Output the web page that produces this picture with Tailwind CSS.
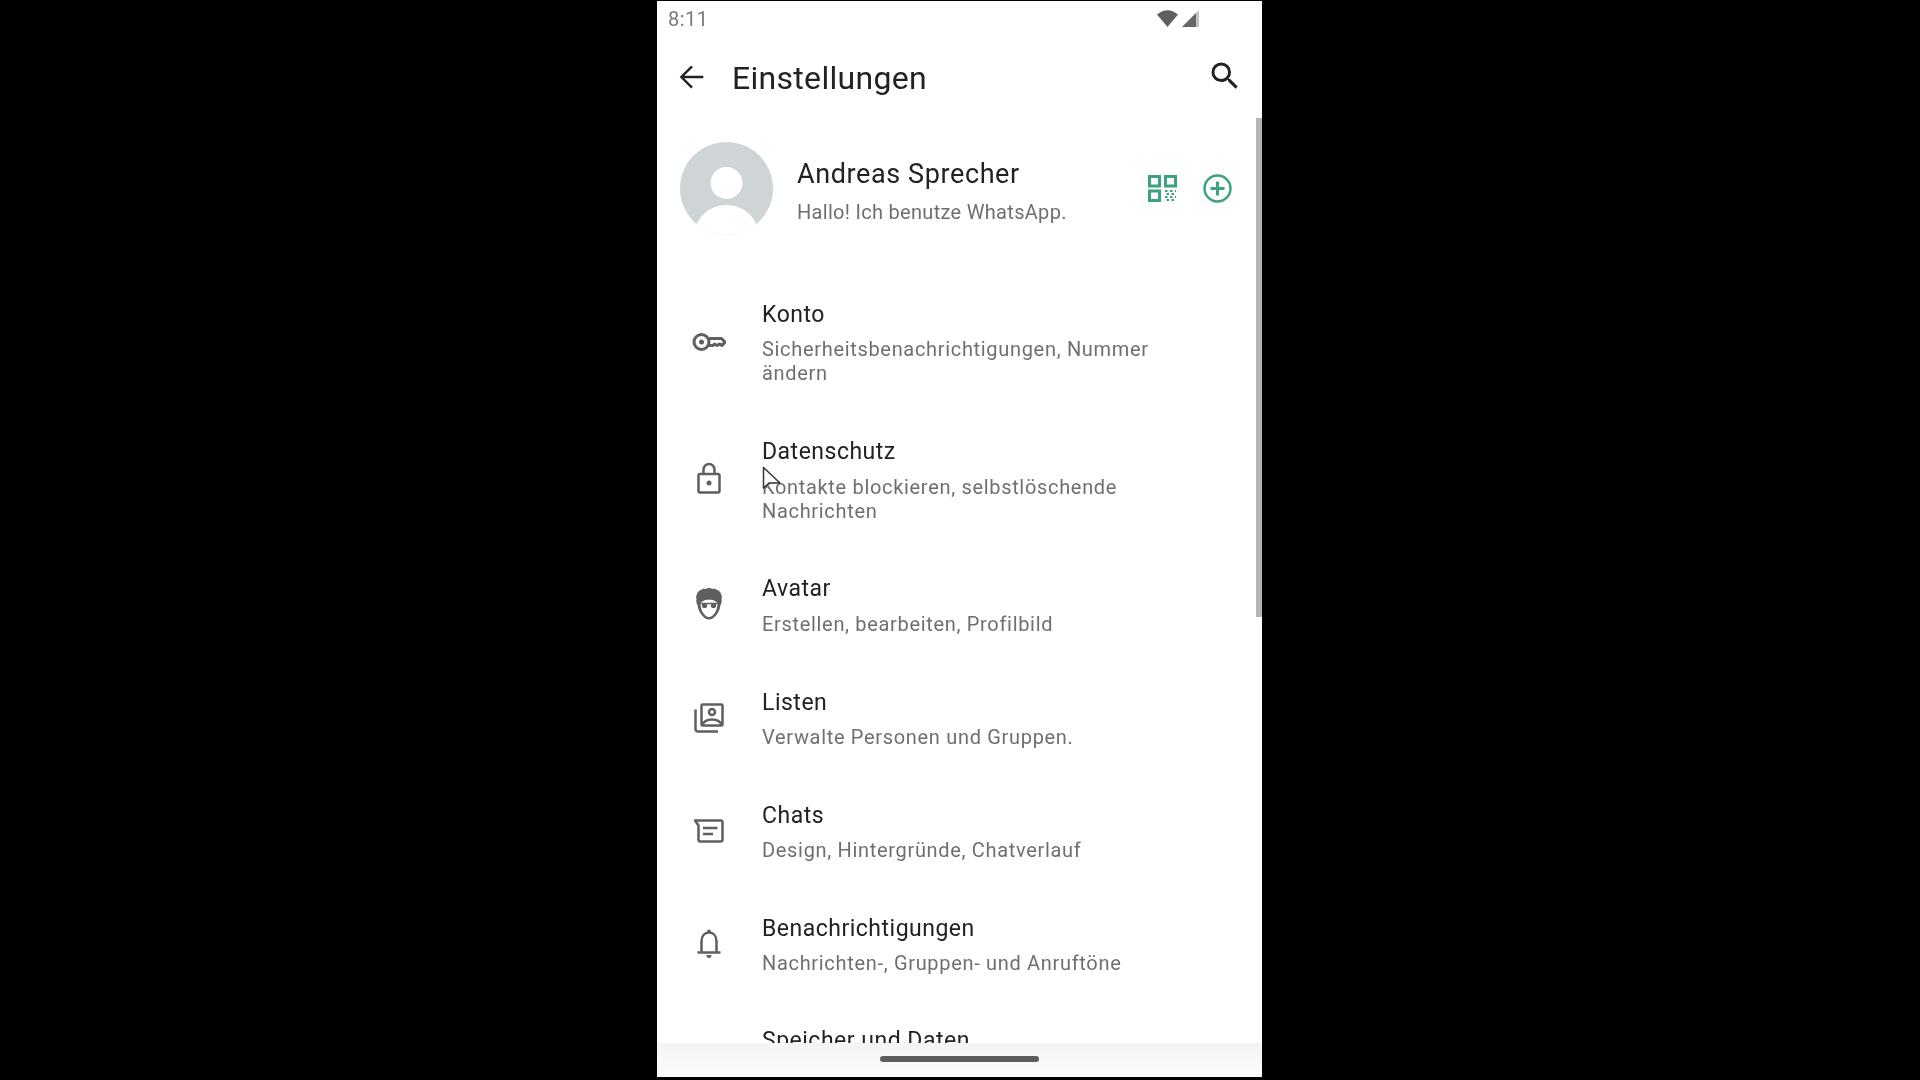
<!doctype html>
<html lang="de">
<head>
<meta charset="utf-8">
<title>Einstellungen</title>
<script src="https://cdn.jsdelivr.net/npm/@tailwindcss/browser@4"></script>
</head>
<body class="bg-black [font-family:Roboto,sans-serif]">
<div class="flex h-[1080px] w-[1920px] overflow-hidden bg-black pt-px pl-[657px]">
  <div class="relative flex flex-col w-[605px] h-[1076px] bg-white overflow-hidden blur-[0.5px]">
    <!-- status -->
    <div class="flex items-start h-[36px] shrink-0 pl-[11px] pr-[63px] text-[20px] text-[#7a7a7a] tracking-[0.5px]">
      <span class="mt-[3px]">8:11</span>
      <div class="ml-auto flex items-center gap-[4px] mt-[8px]">
        <svg class="w-[21px] h-[18px] text-[#5f5f5f]" viewBox="0 0 21 18"><path fill="currentColor" d="M0 5.500Q10.500-3 21 5.500L10.500 18Z"/></svg>
        <svg class="w-[17px] h-[17px]" viewBox="0 0 17 17"><path fill="#c4c4c4" d="M17 0V17H0Z"/><path fill="#666" d="M14 3V17H0Z"/></svg>
      </div>
    </div>
    <!-- toolbar -->
    <div class="flex items-center h-[80px] shrink-0 pl-[18px] pr-[19px] text-[#222]">
      <svg class="w-[34px] h-[34px]" viewBox="0 0 24 24" fill="none" stroke="currentColor" stroke-width="1.700"><path d="M20 12H4.500M12 4.500 4.500 12l7.500 7.500"/></svg>
      <h1 class="ml-[23px] mt-[2px] text-[32px] leading-[40px] font-normal tracking-[0.3px]">Einstellungen</h1>
      <svg class="ml-auto w-[36px] h-[36px] -mt-[3px]" viewBox="0 0 24 24" fill="currentColor"><path d="M15.500 14h-.79l-.28-.27A6.470 6.470 0 0 0 16 9.500 6.500 6.500 0 1 0 9.500 16c1.610 0 3.090-.59 4.230-1.570l.27.28v.79l5 4.990L20.490 19l-4.990-5zm-6 0C7.010 14 5 11.990 5 9.500S7.010 5 9.500 5 14 7.010 14 9.500 11.990 14 9.500 14z"/></svg>
    </div>
    <!-- profile -->
    <div class="flex items-center h-[142px] shrink-0 pl-[23px] pr-[30px]">
      <svg class="w-[93px] h-[93px] shrink-0" viewBox="0 0 93 93">
        <defs><clipPath id="av"><circle cx="46.500" cy="46.500" r="46.500"/></clipPath></defs>
        <circle cx="46.500" cy="46.500" r="46.500" fill="#cfd4d7"/>
        <g clip-path="url(#av)" fill="#fff"><circle cx="46.500" cy="41" r="16"/><ellipse cx="46.500" cy="93" rx="32" ry="30"/></g>
      </svg>
      <div class="ml-[24px] pt-[5px]">
        <div class="text-[27px] leading-[34px] text-[#222] tracking-[0.6px]">Andreas Sprecher</div>
        <div class="mt-[8px] text-[20px] leading-[26px] text-[#6f6f6f] tracking-[0.3px]">Hallo! Ich benutze WhatsApp.</div>
      </div>
      <div class="ml-auto flex items-center gap-[26px] text-[#3da27f]">
        <svg class="w-[29px] h-[27px]" viewBox="0 0 29 27" fill="none" stroke="currentColor" stroke-width="3">
          <rect x="1.500" y="1.500" width="10" height="9.500"/><rect x="17.500" y="1.500" width="10" height="9.500"/><rect x="1.500" y="16" width="10" height="9.500"/>
          <path stroke-width="2" stroke-dasharray="2.500 2.500" d="M17 16h11M18.500 19h10M17 22h11M18.500 25h10"/>
        </svg>
        <svg class="w-[29px] h-[29px]" viewBox="0 0 29 29" fill="none" stroke="currentColor"><circle cx="14.500" cy="14.500" r="13" stroke-width="2.500"/><path stroke-width="3" d="M14.500 7.500v14M7.500 14.500h14"/></svg>
      </div>
    </div>
    <div class="h-[15px] shrink-0"></div>
    <!-- list -->
    <div class="flex-1 min-h-0 overflow-hidden">
      <div class="flex h-[137px] pt-[26px]">
        <div class="w-[105px] shrink-0 flex justify-center pr-[2px] pt-[33px] text-[#5f5f5f]">
          <svg class="w-[34px] h-[18px]" viewBox="0 0 34 18" fill="none" stroke="currentColor" stroke-width="3"><circle cx="9.500" cy="9" r="7.500"/><circle cx="9.500" cy="9" r="2.500" fill="currentColor" stroke="none"/><path stroke-linejoin="round" d="M17 5.500h12.500L33 9l-3 3.500-2.500-1.500-2.500 1.500-2.500-1.500-1.500 1.500H17"/></svg>
        </div>
        <div class="pr-[30px]">
          <div class="text-[23px] leading-[30px] text-[#222] tracking-[0.5px]">Konto</div>
          <div class="mt-[7px] text-[20px] leading-[24px] text-[#6f6f6f] tracking-[0.68px]">Sicherheitsbenachrichtigungen, Nummer<br>ändern</div>
        </div>
      </div>
      <div class="flex h-[137px] pt-[26px]">
        <div class="w-[105px] shrink-0 flex justify-center pr-[2px] pt-[25px] text-[#5f5f5f]">
          <svg class="w-[24px] h-[32px]" viewBox="0 0 24 32" fill="none" stroke="currentColor" stroke-width="2.500"><rect x="1.500" y="12" width="21" height="18.500" rx="1.500"/><path d="M6.500 12V7.500a5.500 5.500 0 0 1 11 0V12"/><circle cx="12" cy="21" r="2.500" fill="currentColor" stroke="none"/></svg>
        </div>
        <div class="pr-[30px]">
          <div class="text-[23px] leading-[30px] text-[#222] tracking-[0.5px]">Datenschutz</div>
          <div class="mt-[8px] text-[20px] leading-[24px] text-[#6f6f6f] tracking-[0.68px]">Kontakte blockieren, selbstlöschende<br>Nachrichten</div>
        </div>
      </div>
      <div class="flex h-[113px] pt-[26px]">
        <div class="w-[105px] shrink-0 flex justify-center pr-[2px] pt-[14px] text-[#5f5f5f]">
          <svg class="w-[26px] h-[32px]" viewBox="0 0 26 32"><path fill="currentColor" d="M13 0c1.500 0 2.500.5 3.500 1 1.500-.5 3.500 0 4.500 1 2 .5 3.500 2 4 4 1 1.500 1 3.500 .5 5.500.5 2 0 4-1 5.500-.5 4.500-2.500 8.500-5 11-2 2.500-4 3.500-6.500 3.500s-4.500-1-6.500-3.500c-2.500-2.500-4.500-6.500-5-11-1-1.500-1.500-3.500-1-5.500-.5-2-.5-4 .5-5.500.5-2 2-3.500 4-4 1-1 3-1.500 4.500-1 1-.5 2-1 3.500-1Z"/><path fill="#fff" d="M4.500 15c1.500-1.500 3-2.500 5-3 2.500-.5 4.500-.5 7 0 2 .5 3.500 1.500 5 3 0 5-1.500 8.500-3.500 11-1.500 2-3 3-5 3s-3.500-1-5-3c-2-2.500-3.500-6-3.500-11Z"/><circle cx="8.500" cy="17.500" r="2.600" fill="currentColor"/><circle cx="17.500" cy="17.500" r="2.600" fill="currentColor"/><path stroke="currentColor" stroke-width="1.500" d="M4.500 15.500h17"/></svg>
        </div>
        <div class="pr-[30px]">
          <div class="text-[23px] leading-[30px] text-[#222] tracking-[0.5px]">Avatar</div>
          <div class="mt-[8px] text-[20px] leading-[24px] text-[#6f6f6f] tracking-[0.68px]">Erstellen, bearbeiten, Profilbild</div>
        </div>
      </div>
      <div class="flex h-[113px] pt-[27px]">
        <div class="w-[105px] shrink-0 flex justify-center pr-[2px] pt-[15px] text-[#5f5f5f]">
          <svg class="w-[30px] h-[30px]" viewBox="0 0 30 30" fill="none" stroke="currentColor" stroke-width="2.500"><rect x="7.500" y="1.500" width="21" height="21" rx="1"/><circle cx="18" cy="9" r="3"/><path d="M8 22c2-4 6-5.500 10-5.500s8 1.500 10 5.500"/><path d="M1.500 6.500V26a2.500 2.500 0 0 0 2.500 2.500h20"/></svg>
        </div>
        <div class="pr-[30px]">
          <div class="text-[23px] leading-[30px] text-[#222] tracking-[0.5px]">Listen</div>
          <div class="mt-[7px] text-[20px] leading-[24px] text-[#6f6f6f] tracking-[0.68px]">Verwalte Personen und Gruppen.</div>
        </div>
      </div>
      <div class="flex h-[113px] pt-[27px]">
        <div class="w-[105px] shrink-0 flex justify-center pr-[2px] pt-[18px] text-[#5f5f5f]">
          <svg class="w-[31px] h-[24px]" viewBox="0 0 31 24" fill="none" stroke="currentColor" stroke-width="2.500"><path stroke-linejoin="round" d="M2 1.500h26a1.500 1.500 0 0 1 1.500 1.500v17.500a2 2 0 0 1-2 2H7.500a2 2 0 0 1-2-2V6.500Z"/><path stroke-width="2.500" d="M10 9h14.500M10 15h10"/></svg>
        </div>
        <div class="pr-[30px]">
          <div class="text-[23px] leading-[30px] text-[#222] tracking-[0.5px]">Chats</div>
          <div class="mt-[7px] text-[20px] leading-[24px] text-[#6f6f6f] tracking-[0.68px]">Design, Hintergründe, Chatverlauf</div>
        </div>
      </div>
      <div class="flex h-[113px] pt-[27px]">
        <div class="w-[105px] shrink-0 flex justify-center pr-[2px] pt-[15px] text-[#5f5f5f]">
          <svg class="w-[24px] h-[29px]" viewBox="0 0 24 29" fill="none" stroke="currentColor" stroke-width="2.500"><path d="M4.500 23V12.500C4.500 7 7.500 3.500 12 3.500s7.500 3.500 7.500 9V23"/><path d="M.5 23.500h23"/><path fill="currentColor" stroke="none" d="M9.500 26h5a2.500 3 0 0 1-5 0ZM10 3.500a2 3 0 0 1 4 0Z"/></svg>
        </div>
        <div class="pr-[30px]">
          <div class="text-[23px] leading-[30px] text-[#222] tracking-[0.5px]">Benachrichtigungen</div>
          <div class="mt-[7px] text-[20px] leading-[24px] text-[#6f6f6f] tracking-[0.68px]">Nachrichten-, Gruppen- und Anruftöne</div>
        </div>
      </div>
      <div class="flex h-[113px] pt-[26px]">
        <div class="w-[105px] shrink-0"></div>
        <div class="text-[23px] leading-[30px] text-[#222] tracking-[0.5px]">Speicher und Daten</div>
      </div>
    </div>
    <!-- nav bar -->
    <div class="flex justify-center items-center h-[34px] shrink-0 bg-linear-to-b from-[#f4f4f4] to-[#fbfbfb] pb-[3px]">
      <div class="w-[159px] h-[6px] rounded-full bg-[#5c5c5c]"></div>
    </div>
    <!-- scrollbar -->
    <div class="absolute right-0 top-[117px] w-[6px] h-[499px] bg-[#b4b4b4]"></div>
    <!-- pointer -->
    <svg class="absolute left-[105px] top-[465px] w-[20px] h-[26px]" viewBox="0 0 20 26"><path fill="#fff" stroke="#333" stroke-width="1.500" stroke-linejoin="round" d="M1.500 1.500V22l5.500-5 11 0Z"/></svg>
  </div>
</div>
</body>
</html>
